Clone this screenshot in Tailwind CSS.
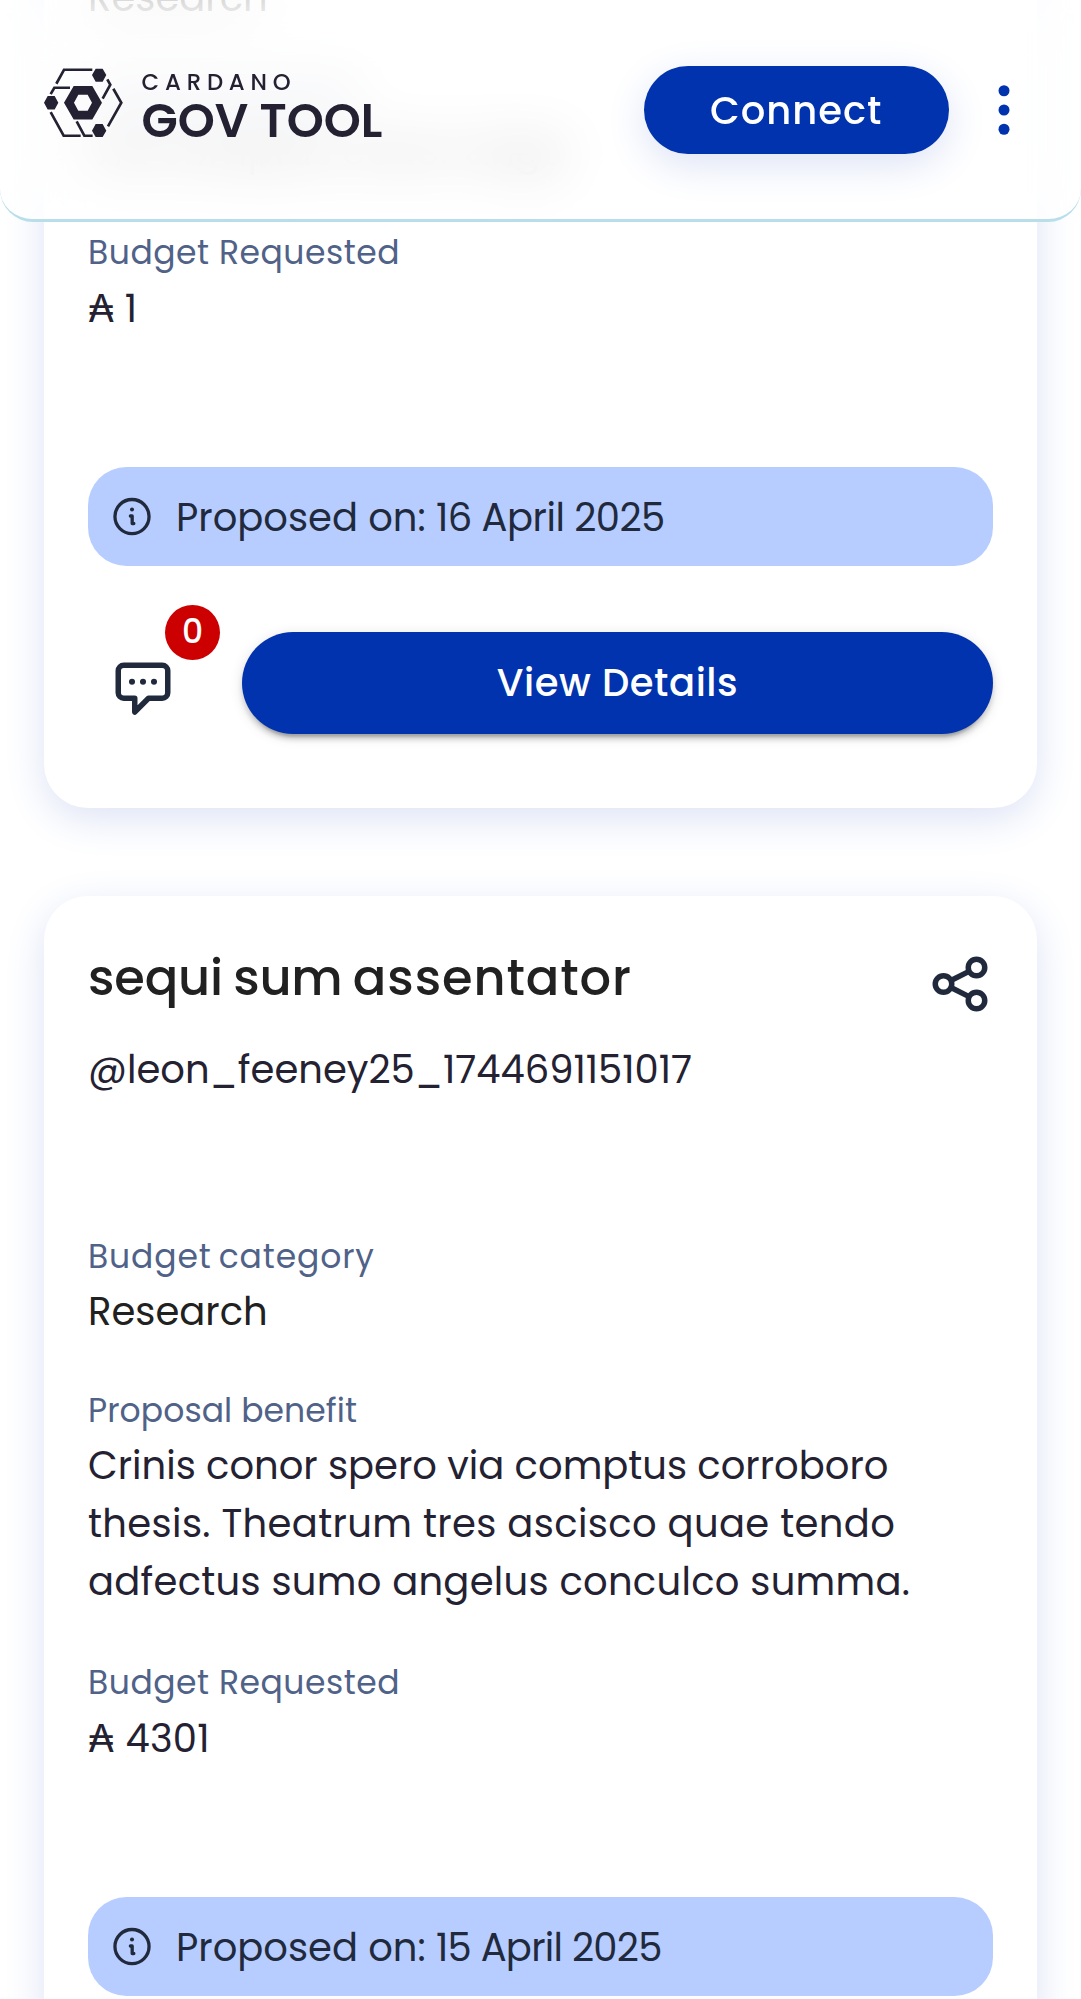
<!DOCTYPE html>
<html lang="en">
<head>
<meta charset="utf-8">
<title>GovTool</title>
<script src="https://cdn.jsdelivr.net/npm/@tailwindcss/browser@4"></script>
</head>
<body class="bg-white">
<svg class="hidden">
  <symbol id="info" viewBox="0 0 24 24"><circle cx="12" cy="12.3" r="9.3" fill="none" stroke="#212A3D" stroke-width="1.8"/><path d="M11.1 12h1v4.1h.9" fill="none" stroke="#212A3D" stroke-width="1.8" stroke-linecap="round" stroke-linejoin="round"/><circle cx="12" cy="8.4" r="1.1" fill="#212A3D"/></symbol>
</svg>
<div class="relative h-[726.9px] w-[393.09px] [zoom:2.75] overflow-hidden bg-white font-['Poppins','Inter',sans-serif] text-[14px] leading-[21px] text-[#242232]">

  <main class="-mt-[152.2px] flex flex-col gap-8 px-4">
    <article class="flex h-[446px] shrink-0 flex-col rounded-2xl bg-white px-4 pt-[16.4px] shadow-[0_4px_15px_0_#DDE3F5]">
      <h2 class="text-[18px] font-medium leading-[27px] text-[#212121]">crux accusator</h2>
      <p class="mt-[9.5px]">@leon_feeney25</p>
      <div class="mt-[49.5px]">
        <div class="text-[12px] leading-4 tracking-[.28px] text-[#506288]">Budget category</div>
        <div class="mt-[1.6px] text-[#212121]">Research</div>
      </div>
      <div class="mt-[17.4px]">
        <div class="text-[12px] leading-4 text-[#506288]">Proposal benefit</div>
        <div class="mt-[1.6px]">Via comptus conor ange</div>
      </div>
      <div class="mt-[18.2px]">
        <div class="text-[12px] leading-4 tracking-[.19px] text-[#506288]">Budget Requested</div>
        <div class="mt-[1.9px]">₳ 1</div>
      </div>
      <div class="mt-[46.9px] flex h-9 shrink-0 items-center gap-2 rounded-[14px] bg-[#B8CDFF] pl-2 text-[#212A3D]">
        <svg class="size-4"><use href="#info"/></svg><span class="mt-[1.2px]">Proposed on: <span class="tracking-[-.18px]">16 April 2025</span></span>
      </div>
      <div class="mt-6 flex h-[37px] items-center">
        <button class="relative mt-[5.4px] ml-[8px] size-6">
          <svg class="size-6" viewBox="0 0 24 24" fill="none" stroke="#212A3D" stroke-width="2" stroke-linejoin="round"><path d="M5 3h14a2 2 0 0 1 2 2v8a2 2 0 0 1-2 2h-5l-5 5v-5H5a2 2 0 0 1-2-2V5a2 2 0 0 1 2-2z"/><g fill="#212A3D" stroke="none"><circle cx="8" cy="9" r="1.1"/><circle cx="12" cy="9" r="1.1"/><circle cx="16" cy="9" r="1.1"/></g></svg>
          <span class="absolute -top-[19.1px] left-[20px] flex size-5 items-center justify-center rounded-full bg-[#CC0000] pb-[.4px] text-[12px] font-medium text-white">0</span>
        </button>
        <button class="ml-6 h-[37px] flex-1 rounded-full bg-[#0033AD] font-medium tracking-[.2px] text-white shadow-[0_3px_1px_-2px_rgba(0,0,0,.2),0_2px_2px_0_rgba(0,0,0,.14),0_1px_5px_0_rgba(0,0,0,.12)]">View Details</button>
      </div>
    </article>

    <article class="flex h-[488px] shrink-0 flex-col rounded-2xl bg-white px-4 pt-[16.4px] shadow-[0_4px_15px_0_#DDE3F5]">
      <div class="flex h-[27px] justify-between">
        <h2 class="text-[18px] font-medium leading-[27px] tracking-[-.06px] [word-spacing:-.9px] text-[#212121]">sequi sum <span class="tracking-[.33px]">assentator</span></h2>
        <svg class="mt-[3.7px] size-6" viewBox="0 0 24 24" fill="none" stroke="#212A3D" stroke-width="2"><path d="M8.7 10.7l6.6-3.3M8.7 13.3l6.6 3.3"/><circle cx="6" cy="12" r="3"/><circle cx="18" cy="6" r="3"/><circle cx="18" cy="18" r="3"/></svg>
      </div>
      <p class="mt-[9.5px]">@leon_feeney25_1744691151017</p>
      <div class="mt-[49.5px]">
        <div class="text-[12px] leading-4 tracking-[.32px] [word-spacing:-1px] text-[#506288]">Budget category</div>
        <div class="mt-[1.3px] text-[#212121]">Research</div>
      </div>
      <div class="mt-[17.7px]">
        <div class="text-[12px] leading-4 tracking-[.03px] text-[#506288]">Proposal benefit</div>
        <div class="mt-[1.4px]">Crinis conor spero via comptus corroboro <span class="tracking-[.13px]">thesis. Theatrum tres ascisco quae tendo</span> <span class="tracking-[.1px]">adfectus sumo angelus conculco summa.</span></div>
      </div>
      <div class="mt-[18.4px]">
        <div class="text-[12px] leading-4 tracking-[.19px] text-[#506288]">Budget Requested</div>
        <div class="mt-[1.9px] tracking-[.1px]">₳ 4301</div>
      </div>
      <div class="mt-[46.9px] flex h-9 shrink-0 items-center gap-2 rounded-[14px] bg-[#B8CDFF] pl-2 text-[#212A3D]">
        <svg class="size-4"><use href="#info"/></svg><span class="mt-[1.2px]">Proposed on: <span class="tracking-[-.26px]">15 April 2025</span></span>
      </div>
    </article>
  </main>

  <header class="absolute inset-x-0 top-0 flex h-[80.7px] items-center rounded-b-[12px] border-b-[1.1px] border-[#B8DFE9] bg-white/70 pl-4 backdrop-blur-[10px]">
    <svg class="-mt-[4.6px] h-[25.5px] w-[28.6px]" viewBox="42 54 236 210" fill="none" stroke="#242232" stroke-width="8">
      <path d="M187 59H102L79 101M62 132L73 113H120M232 88L241 104L218 146M250 116L274 158L234 229M62 186L101 257H152M140 214L163 257H188"/>
      <path fill="#242232" stroke="none" fill-rule="evenodd" d="M131 108h56l29 50-29 50h-56l-29-50zM145 134l-13 24 13 24h28l13-24-13-24z"/>
      <path fill="#242232" stroke="none" d="M197 56h21l11 19-11 20h-21l-11-20zM197 222h21l11 20-11 19h-21l-11-19zM53 138h21l11 20-11 20H53l-11-20z"/>
    </svg>
    <div class="-mt-[2.6px] ml-[6.9px] flex flex-col">
      <span class="text-[8.3px] leading-[11px] font-medium tracking-[2.1px]">CARDANO</span>
      <span class="text-[17.15px] leading-[17px] font-semibold">GOV TOOL</span>
    </div>
    <button class="absolute left-[234px] top-[24px] h-[32px] w-[111px] rounded-full bg-[#0033AD] pt-[.3px] font-medium tracking-[.36px] text-white shadow-[0_4px_15px_0_#DDE3F5]">Connect</button>
    <svg class="absolute left-[353px] top-[28px] size-6" viewBox="0 0 24 24" fill="#0033AD"><circle cx="12" cy="5" r="2"/><circle cx="12" cy="12" r="2"/><circle cx="12" cy="19" r="2"/></svg>
  </header>
</div>
</body>
</html>
